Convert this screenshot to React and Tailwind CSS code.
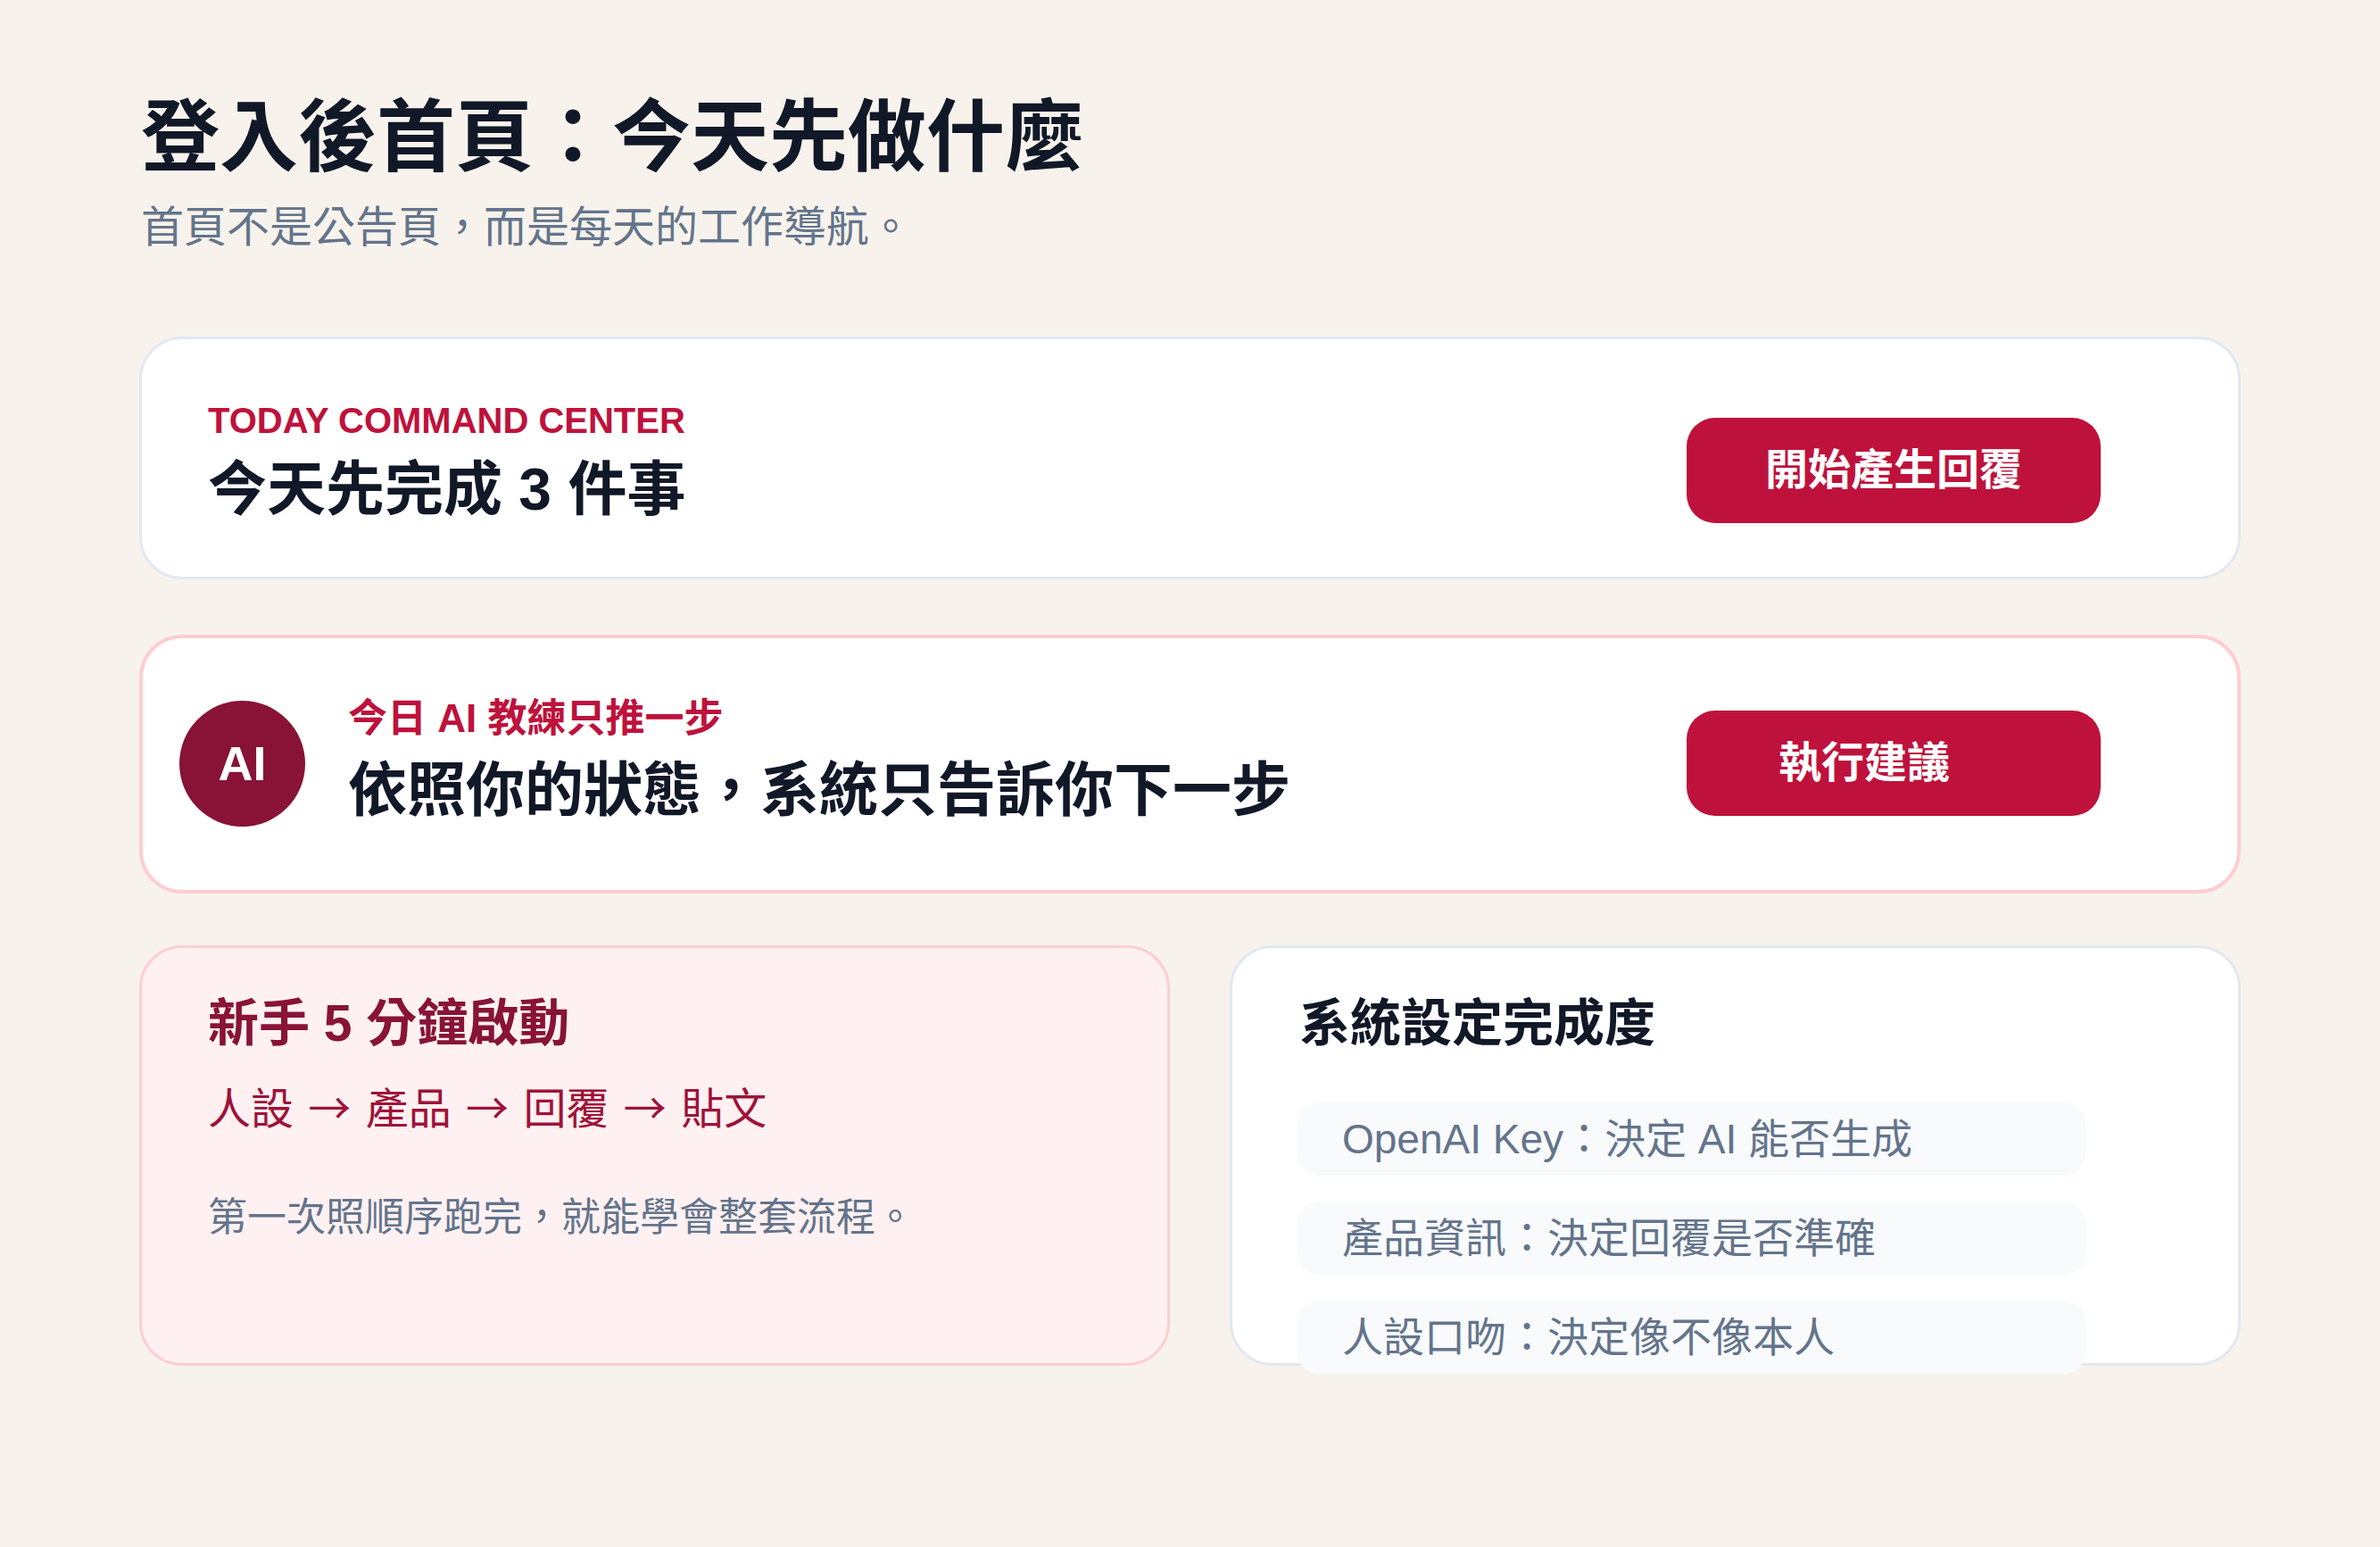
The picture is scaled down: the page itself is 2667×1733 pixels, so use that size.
export default function App() {
  const font = { fontFamily: '"Liberation Sans", "Noto Sans CJK TC", sans-serif' };
  const cjkFirst = { fontFamily: '"Noto Sans CJK TC", "Liberation Sans", sans-serif' };
  const rows = ["OpenAI Key：決定 AI 能否生成", "產品資訊：決定回覆是否準確", "人設口吻：決定像不像本人"];
  const steps = ["人設", "產品", "回覆", "貼文"];

  return (
    <div
      className="min-h-[1733px] w-[2667px] bg-[#f7f3ec] pl-[156px] pt-[101px] text-[#111827]"
      style={font}
    >
      <header>
        <h1 className="text-[88px] font-bold leading-[106px] pl-[2px]">登入後首頁：今天先做什麼</h1>
        <p className="mt-[18px] text-[48px] leading-[60px] text-[#64748b] pl-[2px]">
          首頁不是公告頁，而是每天的工作導航。
        </p>
      </header>

      <div className="mt-[92px] flex w-[2355px] flex-col">
        {/* command center */}
        <section className="flex h-[272px] items-start justify-between rounded-[48px] border-[3px] border-[#e2e8f0] bg-white pl-[74px] pr-[154px]">
          <div className="pt-[67px]">
            <div className="text-[40px] font-bold leading-[48px] text-[#be123c]">TODAY COMMAND CENTER</div>
            <div className="mt-[13px] text-[66px] font-bold leading-[80px]">今天先完成 3 件事</div>
          </div>
          <button className="mt-[88px] flex h-[118px] w-[464px] items-center justify-center rounded-[32px] bg-[#be123c] text-[48px] font-bold text-white">
            開始產生回覆
          </button>
        </section>

        {/* AI coach */}
        <section className="mt-[62px] flex h-[290px] items-start justify-between rounded-[48px] border-[4px] border-[#fecdd3] bg-white pl-[41px] pr-[153px]">
          <div className="flex items-start gap-[48px]">
            <div className="mt-[70px] flex h-[141px] w-[141px] items-center justify-center rounded-full bg-[#881337] text-[54px] font-bold text-white">
              AI
            </div>
            <div className="pt-[65px]">
              <div className="text-[44px] font-bold leading-[50px] text-[#be123c]">今日 AI 教練只推一步</div>
              <div className="mt-[14px] text-[66px] font-bold leading-[82px]">依照你的狀態，系統只告訴你下一步</div>
            </div>
          </div>
          <button className="mt-[81px] flex h-[118px] w-[464px] items-center rounded-[32px] bg-[#be123c] pl-[103px] text-[48px] font-bold text-white">
            執行建議
          </button>
        </section>

        <div className="mt-[58px] flex gap-[67px]">
          {/* onboarding */}
          <section className="h-[471px] w-[1155px] rounded-[48px] border-[3px] border-[#fecdd3] bg-[#fff1f2] pl-[74px] pt-[49px]">
            <h2 className="text-[57px] font-bold leading-[70px] text-[#881337]">新手 5 分鐘啟動</h2>
            <div className="mt-[27px] whitespace-pre text-[48px] leading-[60px] text-[#9f1239]">
              {steps.map((s, i) => (
                <span key={s}>
                  {i > 0 && (
                    <>
                      {" "}
                      <span className="px-[3px]" style={cjkFirst}>→</span>{" "}
                    </>
                  )}
                  {s}
                </span>
              ))}
            </div>
            <p className="mt-[63px] text-[44px] leading-[55px] text-[#64748b]">第一次照順序跑完，就能學會整套流程。</p>
          </section>

          {/* setup progress */}
          <section className="h-[471px] w-[1133px] rounded-[48px] border-[3px] border-[#e2e8f0] bg-white pl-[73px] pt-[49px]">
            <h2 className="pl-[2px] text-[57px] font-bold leading-[70px]">系統設定完成度</h2>
            <div className="mt-[54px] flex flex-col gap-[29px]">
              {rows.map((r) => (
                <div
                  key={r}
                  className="flex h-[82px] w-[883px] items-center rounded-[24px] bg-[#f8fafc] pl-[50px] text-[46px] text-[#64748b]"
                >
                  {r}
                </div>
              ))}
            </div>
          </section>
        </div>
      </div>
    </div>
  );
}
